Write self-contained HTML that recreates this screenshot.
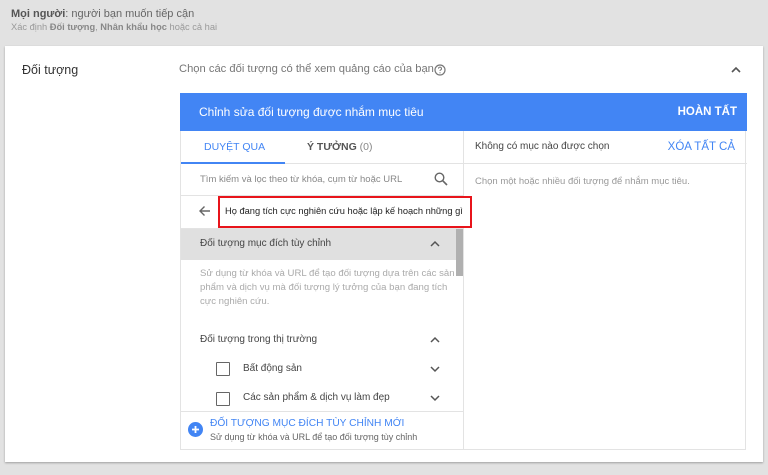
<!DOCTYPE html>
<html><head><meta charset="utf-8"><style>
*{box-sizing:border-box;margin:0;padding:0}
body{width:768px;height:475px;background:#e2e2e2;font-family:"Liberation Sans",Arial,sans-serif;position:relative;overflow:hidden;color:#333}
.a{position:absolute;white-space:nowrap}
.card{position:absolute;left:5px;top:46px;width:758px;height:416px;background:#fff;box-shadow:0 1px 2px rgba(0,0,0,.3)}
.panel{position:absolute;left:180px;top:93px;width:566px;height:357px;border:1px solid #e3e3e3;background:#fff}
.hd{position:absolute;left:-1px;top:-1px;width:567px;height:38px;background:#4285f4;color:#fff}
</style></head><body>
<div class="a" style="left:11px;top:8px;font-size:11px;color:#666"><b style="color:#555">Mọi người</b>: người bạn muốn tiếp cận</div>
<div class="a" style="left:11px;top:22px;font-size:9.3px;color:#999">Xác định <b style="color:#888">Đối tượng</b>, <b style="color:#888">Nhân khẩu học</b> hoặc cả hai</div>
<div class="card"></div>
<div class="a" style="left:22px;top:63px;font-size:12.5px;color:#333">Đối tượng</div>
<div class="a" style="left:179px;top:63px;font-size:11.2px;color:#777">Chọn các đối tượng có thể xem quảng cáo của bạn</div>
<svg class="a" style="left:434px;top:64px" width="12" height="12" viewBox="0 0 12 12"><circle cx="6" cy="6" r="5" fill="none" stroke="#777" stroke-width="1.2"/><path d="M4.5 4.6a1.5 1.5 0 1 1 2 1.4c-.5.2-.5.6-.5 1" fill="none" stroke="#777" stroke-width="1"/><circle cx="6" cy="8.8" r=".6" fill="#777"/></svg>
<svg class="a" style="left:731px;top:66px" width="10" height="7" viewBox="0 0 10 7"><path d="M1 6l4-4 4 4" fill="none" stroke="#555" stroke-width="1.6"/></svg>
<div class="panel">
<div class="hd"><div class="a" style="left:19px;top:12px;font-size:12px">Chỉnh sửa đối tượng được nhắm mục tiêu</div><div class="a" style="right:10px;top:13px;font-size:11.5px;font-weight:bold">HOÀN TẤT</div></div>
<div class="a" style="left:282px;top:37px;width:1px;height:319px;background:#e3e3e3"></div>
<div class="a" style="left:0;top:69px;width:566px;height:1px;background:#e3e3e3"></div>
<div class="a" style="left:0;top:68px;width:104px;height:2px;background:#4285f4"></div>
<div class="a" style="left:23px;top:47px;font-size:10.5px;color:#4285f4">DUYỆT QUA</div>
<div class="a" style="left:126px;top:47px;font-size:10.5px;color:#555;font-weight:bold">Ý TƯỞNG <span style="font-weight:normal;color:#888">(0)</span></div>
<div class="a" style="left:294px;top:47px;font-size:10px;color:#444">Không có mục nào được chọn</div>
<div class="a" style="right:10px;top:47px;font-size:11.5px;color:#4285f4">XÓA TẤT CẢ</div>
<div class="a" style="left:294px;top:82px;font-size:9.5px;color:#999">Chọn một hoặc nhiều đối tượng để nhắm mục tiêu.</div>
<div class="a" style="left:19px;top:80px;font-size:9.5px;color:#888">Tìm kiếm và lọc theo từ khóa, cụm từ hoặc URL</div>
<svg class="a" style="left:253px;top:78px" width="14" height="14" viewBox="0 0 14 14"><circle cx="5.5" cy="5.5" r="4.3" fill="none" stroke="#666" stroke-width="1.4"/><path d="M8.7 8.7l4.3 4.3" stroke="#666" stroke-width="1.6"/></svg>
<div class="a" style="left:0;top:101px;width:282px;height:1px;background:#e3e3e3"></div>
<svg class="a" style="left:17px;top:111px" width="13" height="12" viewBox="0 0 13 12"><path d="M12 6H2M6.5 1.5L2 6l4.5 4.5" fill="none" stroke="#666" stroke-width="1.4"/></svg>
<div class="a" style="left:0;top:134px;width:282px;height:1px;background:#e3e3e3"></div>
<div class="a" style="left:0;top:135px;width:282px;height:31px;background:#e0e0e0"></div>
<div class="a" style="left:275px;top:135px;width:7px;height:47px;background:#b0b0b0"></div>
<div class="a" style="left:19px;top:144px;font-size:10px;color:#444">Đối tượng mục đích tùy chỉnh</div>
<svg class="a" style="left:249px;top:146px" width="10" height="7" viewBox="0 0 10 7"><path d="M1 6l4-4 4 4" fill="none" stroke="#555" stroke-width="1.5"/></svg>
<div class="a" style="left:19px;top:173px;font-size:9.6px;color:#aaa;line-height:14px;white-space:normal;width:255px">Sử dụng từ khóa và URL để tạo đối tượng dựa trên các sản phẩm và dịch vụ mà đối tượng lý tưởng của bạn đang tích cực nghiên cứu.</div>
<div class="a" style="left:19px;top:240px;font-size:10px;color:#444">Đối tượng trong thị trường</div>
<svg class="a" style="left:249px;top:242px" width="10" height="7" viewBox="0 0 10 7"><path d="M1 6l4-4 4 4" fill="none" stroke="#555" stroke-width="1.5"/></svg>
<div class="a" style="left:35px;top:268px;width:14px;height:14px;border:1.5px solid #666;border-radius:1px"></div>
<div class="a" style="left:62px;top:269px;font-size:10px;color:#444">Bất động sản</div>
<svg class="a" style="left:249px;top:272px" width="10" height="7" viewBox="0 0 10 7"><path d="M1 1l4 4 4-4" fill="none" stroke="#555" stroke-width="1.5"/></svg>
<div class="a" style="left:35px;top:298px;width:14px;height:14px;border:1.5px solid #666;border-radius:1px"></div>
<div class="a" style="left:62px;top:298px;font-size:10px;color:#444">Các sản phẩm &amp; dịch vụ làm đẹp</div>
<svg class="a" style="left:249px;top:301px" width="10" height="7" viewBox="0 0 10 7"><path d="M1 1l4 4 4-4" fill="none" stroke="#555" stroke-width="1.5"/></svg>
<div class="a" style="left:0;top:317px;width:282px;height:1px;background:#e3e3e3"></div>
<svg class="a" style="left:7px;top:328px" width="15" height="15" viewBox="0 0 15 15"><circle cx="7.5" cy="7.5" r="7.5" fill="#4285f4"/><path d="M7.5 4v7M4 7.5h7" stroke="#fff" stroke-width="1.8"/></svg>
<div class="a" style="left:29px;top:324px;font-size:10.2px;color:#4285f4">ĐỐI TƯỢNG MỤC ĐÍCH TÙY CHỈNH MỚI</div>
<div class="a" style="left:29px;top:338px;font-size:9px;color:#666">Sử dụng từ khóa và URL để tạo đối tượng tùy chỉnh</div>
</div>
<div class="a" style="left:218px;top:196px;width:254px;height:32px;border:2px solid #e8141b;background:#fff"></div>
<div class="a" style="left:225px;top:206px;font-size:9.3px;color:#222">Họ đang tích cực nghiên cứu hoặc lập kế hoạch những gì</div>
</body></html>
